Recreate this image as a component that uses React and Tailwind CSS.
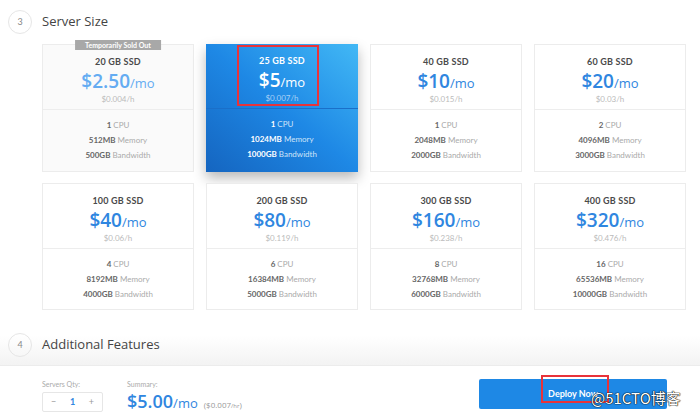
import React from "react";

const plans = [
  { ssd: "20 GB SSD", price: "$2.50", hr: "$0.004/h", cpu: "1", mem: "512MB", bw: "500GB", sold: true },
  { ssd: "25 GB SSD", price: "$5", hr: "$0.007/h", cpu: "1", mem: "1024MB", bw: "1000GB", selected: true },
  { ssd: "40 GB SSD", price: "$10", hr: "$0.015/h", cpu: "1", mem: "2048MB", bw: "2000GB" },
  { ssd: "60 GB SSD", price: "$20", hr: "$0.03/h", cpu: "2", mem: "4096MB", bw: "3000GB" },
  { ssd: "100 GB SSD", price: "$40", hr: "$0.06/h", cpu: "4", mem: "8192MB", bw: "4000GB" },
  { ssd: "200 GB SSD", price: "$80", hr: "$0.119/h", cpu: "6", mem: "16384MB", bw: "5000GB" },
  { ssd: "300 GB SSD", price: "$160", hr: "$0.238/h", cpu: "8", mem: "32768MB", bw: "6000GB" },
  { ssd: "400 GB SSD", price: "$320", hr: "$0.476/h", cpu: "16", mem: "65536MB", bw: "10000GB" },
];

const priceFont = { fontFamily: "'Open Sans', Lato, sans-serif" };

function Card({ p }) {
  const sel = p.selected;
  const base = sel
    ? "relative bg-gradient-to-tr from-[#1565c0] via-[#1e88e5] to-[#42b8f5] shadow-[0_6px_12px_rgba(0,0,0,0.28)]"
    : p.sold
    ? "relative bg-[#fafafa] border border-[#ececec]"
    : "relative bg-white border border-[#ececec]";
  return (
    <div className={base + " flex flex-col"}>
      {p.sold && (
        <div className="absolute left-1/2 -translate-x-1/2 -top-[5px] bg-[#a8a8a8] text-white text-[7px] font-bold px-[10px] h-[10px] leading-[10px] whitespace-nowrap">
          Temporarily Sold Out
        </div>
      )}
      {sel && (
        <div className="absolute left-[31px] top-[1px] w-[82px] h-[61px] border-2 border-[#e8333a]" />
      )}
      <div className={"h-[65px] flex flex-col items-center pt-[11px] " + (sel ? "border-b border-[#1a6fc9]" : "border-b border-[#ededed]")}>
        <div className={"text-[9px] font-bold leading-[11px] tracking-[0.2px] " + (sel ? "text-white" : "text-[#4a4a4a]")}>{p.ssd}</div>
        <div className={"mt-[3px] leading-[22px] " + (sel ? "text-white" : p.sold ? "text-[#64acf2]" : "text-[#2f86e0]")} style={priceFont}>
          <span className="text-[19px] font-semibold">{p.price}</span>
          <span className="text-[13px]">/mo</span>
        </div>
        <div className={"text-[8px] leading-[11px] " + (sel ? "text-[#a8d0f5]" : "text-[#bbbbbb]")}>{p.hr}</div>
      </div>
      <div className={"flex-1 flex flex-col items-center pt-[10px] gap-[4px] text-[8px] leading-[11px] " + (sel ? "text-[#cfe4f9]" : "text-[#aaaaaa]")}>
        <div><span className={"font-bold " + (sel ? "text-white" : "text-[#666]")}>{p.cpu}</span> CPU</div>
        <div><span className={"font-bold " + (sel ? "text-white" : "text-[#666]")}>{p.mem}</span> Memory</div>
        <div><span className={"font-bold " + (sel ? "text-white" : "text-[#666]")}>{p.bw}</span> Bandwidth</div>
      </div>
    </div>
  );
}

function StepHeader({ n, title }) {
  return (
    <div className="flex items-center gap-[10px] pl-[8px] h-[24px]">
      <div className="w-[24px] h-[24px] rounded-full border border-[#e6e6e6] flex items-center justify-center text-[9px] text-[#888]">
        {n}
      </div>
      <div className="text-[13px] text-[#444]" style={{ fontFamily: "'Open Sans', sans-serif", fontWeight: 500 }}>{title}</div>
    </div>
  );
}

export default function App() {
  return (
    <div className="w-[700px] h-[416px] bg-white overflow-hidden relative" style={{ fontFamily: "Lato, 'Open Sans', sans-serif" }}>
      <div className="h-[365px] flex flex-col bg-gradient-to-b from-white from-[92%] to-[#f3f3f3]">
        <div className="pt-[10px] h-[44px]">
          <StepHeader n="3" title="Server Size" />
        </div>
        <div className="ml-[42px] w-[644px] grid grid-cols-4 gap-x-[12px] gap-y-[11px] grid-rows-[128px_127px]">
          {plans.map((p) => (
            <Card key={p.ssd} p={p} />
          ))}
        </div>
        <div className="mt-[23px]">
          <StepHeader n="4" title="Additional Features" />
        </div>
      </div>
      <div className="h-[51px] bg-white border-t border-[#ececec] flex items-start pl-[42px] pr-[33px] relative">
        <div className="flex flex-col pt-[14px]">
          <div className="text-[7px] text-[#aaa] leading-[9px]">Servers Qty:</div>
          <div className="mt-[3px] w-[61px] h-[20px] border border-[#e6e6e6] rounded-[2px] flex items-center justify-between px-[8px] text-[9px]">
            <span className="text-[#999]">−</span>
            <span className="text-[#2f86e0] font-bold">1</span>
            <span className="text-[#999]">+</span>
          </div>
        </div>
        <div className="flex flex-col pt-[14px] ml-[24px]">
          <div className="text-[7px] text-[#aaa] leading-[9px]">Summary:</div>
          <div className="flex items-baseline leading-[22px] mt-[1px]" style={priceFont}>
            <span className="text-[18px] font-semibold text-[#2f86e0]">$5.00</span>
            <span className="text-[13px] text-[#2f86e0]">/mo</span>
            <span className="text-[8px] text-[#999] ml-[6px]">($0.007<span className="text-[6px]">/hr</span>)</span>
          </div>
        </div>
        <div className="ml-auto mt-[13px] w-[188px] h-[30px] bg-[#1e88e5] rounded-[2px] flex items-center justify-center text-white text-[9px] font-bold">
          Deploy Now
        </div>
        <div className="absolute left-[541px] top-[9px] w-[68px] h-[28px] border-2 border-[#e8333a]" />
      </div>
      <div
        className="absolute left-[591px] top-[388px] text-white text-[15px] leading-[20px] whitespace-nowrap"
        style={{ fontFamily: "'Noto Sans CJK SC', sans-serif", textShadow: "0 0 1px #000, 0 0 1px #000, 0 0 1px #000" }}
      >
        @51CTO博客
      </div>
    </div>
  );
}
